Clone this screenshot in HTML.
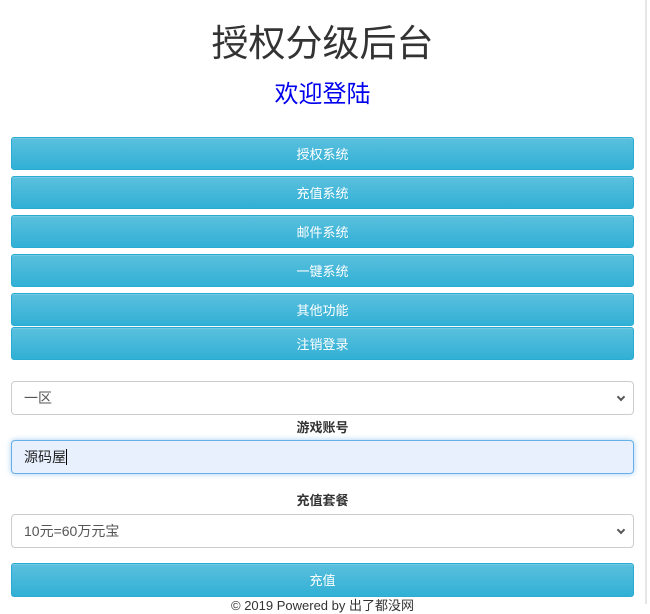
<!DOCTYPE html>
<html><head><meta charset="utf-8"><style>
body{margin:0;width:650px;height:604px;overflow:hidden;background:#fff;font-family:"Liberation Sans","Noto Sans CJK SC",sans-serif;position:relative}
.edge{position:absolute;left:645px;top:0;width:2px;height:604px;background:#e6e6e6}
.t{position:absolute;left:0;width:645px;text-align:center}
.btn{position:absolute;left:11px;width:623px;height:33px;border-radius:3px;background:linear-gradient(#5bc0de,#31b0d5);border:1px solid #2aabd2;box-sizing:border-box;color:#fff;font-size:13px;text-align:center;line-height:33px;box-shadow:inset 0 1px 0 rgba(255,255,255,.15)}
.sel{position:absolute;left:11px;width:623px;height:34px;box-sizing:border-box;border:1px solid #ccc;border-radius:4px;background:#fff;font-size:14px;color:#555;padding-left:12px;line-height:32px}
.arr:after{content:"";position:absolute;right:9px;top:12px;width:4px;height:4px;border-right:2px solid #555;border-bottom:2px solid #555;transform:rotate(45deg)}
.lbl{position:absolute;left:0;width:645px;text-align:center;font-size:13px;font-weight:bold;color:#333}
</style></head><body>
<div class="edge"></div>
<div class="t" style="top:20px;font-size:37px;color:#333;line-height:48px">授权分级后台</div>
<div class="t" style="top:79px;font-size:24px;color:#0000ee;line-height:32px">欢迎登陆</div>
<div class="btn" style="top:137px">授权系统</div>
<div class="btn" style="top:176px">充值系统</div>
<div class="btn" style="top:215px">邮件系统</div>
<div class="btn" style="top:254px">一键系统</div>
<div class="btn" style="top:293px">其他功能</div>
<div class="btn" style="top:327px">注销登录</div>
<div class="sel arr" style="top:381px">一区</div>
<div class="lbl" style="top:417px">游戏账号</div>
<div class="sel" style="top:440px;background:#e8f0fe;border-color:#66afe9;box-shadow:0 0 6px rgba(102,175,233,.6);color:#222">源码屋<span style="display:inline-block;width:1px;height:16px;background:#000;vertical-align:-3px"></span></div>
<div class="lbl" style="top:490px">充值套餐</div>
<div class="sel arr" style="top:514px">10元=60万元宝</div>
<div class="btn" style="top:563px;height:34px;line-height:34px">充值</div>
<div class="t" style="top:598px;font-size:13px;color:#333;line-height:16px">© 2019 Powered by 出了都没网</div>
</body></html>
